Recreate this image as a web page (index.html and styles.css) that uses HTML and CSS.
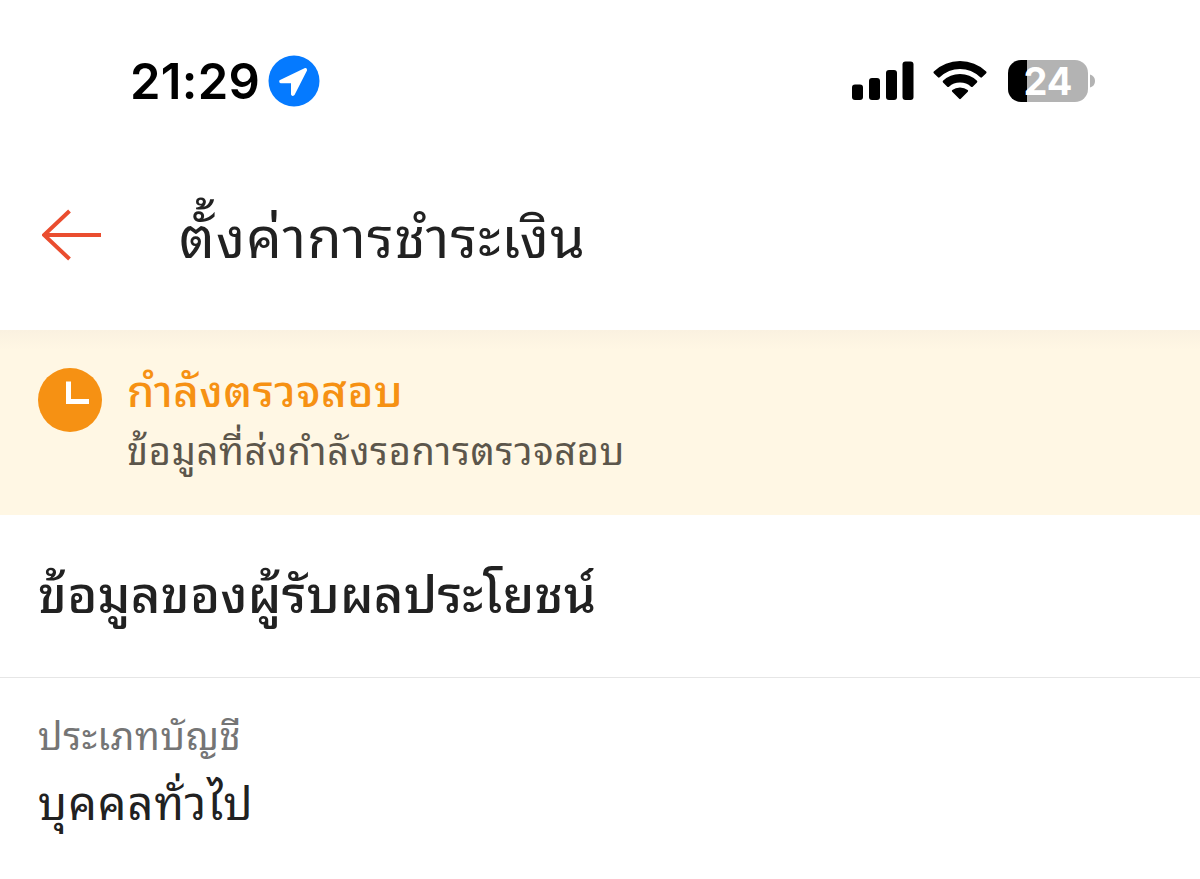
FILE: index.html
```html
<!DOCTYPE html>
<html lang="th">
  <head>
    <meta charset="UTF-8" />
    <title>ตั้งค่าการชำระเงิน</title>
    <link rel="stylesheet" href="styles.css">
  </head>
  <body>
    <!-- status bar -->
    <div class="status-bar">
      <span class="time">21:29</span>
      <svg class="location" viewBox="0 0 52 52">
        <circle cx="26" cy="26" r="25.5" fill="#057aff" />
        <path d="M37 13L11.500 25.300Q10.500 28 13 28.200H23V39.500Q24 42 26.500 40L39 15.500Q39.500 12.500 37 13Z" fill="#fff" />
      </svg>
      <svg class="signal" viewBox="0 0 62 40">
        <rect x="0" y="23.5" width="11" height="15.5" rx="3" />
        <rect x="17" y="17" width="11" height="22" rx="3" />
        <rect x="34" y="9" width="11" height="30" rx="3" />
        <rect x="50.5" y="0.5" width="11" height="38.5" rx="3" />
      </svg>
      <svg class="wifi" viewBox="0 0 54 40">
        <path d="M0.8 12.2Q0 11.4 0.8 10.5Q12 0 27 0T53.2 10.5Q54 11.4 53.2 12.2L49 16.3Q48.200 17 47.300 16.300Q38.500 8 27 8T6.700 16.300Q5.800 17 5 16.300Z" />
        <path d="M10 21.400Q9.300 20.600 10 19.800Q17 13 27 13T44 19.800Q44.700 20.600 44 21.400L39.700 25.700Q38.900 26.400 38 25.700Q33.500 21.500 27 21.500T16 25.700Q15.100 26.400 14.300 25.700Z" />
        <path d="M19.200 30.700Q18.400 29.900 19.300 29.100Q22.500 26.500 27 26.500T34.700 29.100Q35.600 29.900 34.800 30.700L27.800 37.800Q27 38.500 26.200 37.800Z" />
      </svg>
      <div class="battery">
        <div class="battery-body">24</div>
        <svg class="battery-tip" viewBox="0 0 5 14">
          <path d="M0 0.500Q5 2 5 7T0 13.500Z" fill="#b3b3b3" />
        </svg>
      </div>
    </div>

    <header class="header">
      <svg class="back" viewBox="0 0 60 52">
        <path d="M59 26H2M27.500 2L2 26L27.500 50" />
      </svg>
      <h1>ตั้งค่าการชำระเงิน</h1>
    </header>

    <div class="notice">
      <svg class="clock" viewBox="0 0 64 64">
        <circle cx="32" cy="32" r="32" fill="#f69113" />
        <path d="M30.500 13.500V33.500H51" fill="none" stroke="#fff" stroke-width="5" />
      </svg>
      <div class="notice-text">
        <h2>กำลังตรวจสอบ</h2>
        <p>ข้อมูลที่ส่งกำลังรอการตรวจสอบ</p>
      </div>
    </div>

    <h3 class="section-title">ข้อมูลของผู้รับผลประโยชน์</h3>

    <div class="field">
      <p class="label">ประเภทบัญชี</p>
      <p class="value">บุคคลทั่วไป</p>
    </div>
  </body>
</html>
```

FILE: styles.css
```css
* {
  box-sizing: border-box;
}
body {
  margin: 0;
  background: #fff;
  color: #212121;
  font-family: Thonburi, "Noto Sans Thai Looped", Loma, Garuda, Waree, "Noto Serif Thai", sans-serif;
}
h1,
h2,
h3,
p {
  margin: 0;
  white-space: nowrap;
}
.status-bar {
  display: flex;
  align-items: center;
  height: 162px;
  padding-left: 130px;
  font-family: Inter, sans-serif;
}
.time {
  width: 138px;
  font-size: 49px;
  font-weight: 600;
  letter-spacing: 0.3px;
  color: #000;
}
.location {
  width: 52px;
  height: 52px;
}
.signal {
  width: 62px;
  height: 40px;
  margin-left: 532px;
}
.wifi {
  width: 54px;
  height: 40px;
  margin-left: 19px;
}
.battery {
  display: flex;
  align-items: center;
  gap: 2px;
  margin-left: 21px;
}
.battery-body {
  width: 80px;
  height: 42px;
  border-radius: 13px;
  background: linear-gradient(to right, #000 19px, #b3b3b3 19px);
  color: #fff;
  font-size: 38px;
  font-weight: 700;
  line-height: 42px;
  text-align: center;
}
.battery-tip {
  width: 5px;
  height: 14px;
}
.header {
  display: flex;
  align-items: center;
  height: 168px;
  padding: 0 42px 22px;
}
.back {
  width: 60px;
  height: 52px;
  fill: none;
  stroke: #ea4d2f;
  stroke-width: 4;
}
.header h1 {
  margin: -4px 0 0 77px;
  font-size: 56px;
  font-weight: 400;
  letter-spacing: 1.2px;
  line-height: 76px;
}
.notice {
  display: flex;
  height: 185px;
  padding: 30px 38px;
  background: linear-gradient(#faf1e0, #fff7e4 20px);
}
.clock {
  width: 64px;
  height: 64px;
  margin-top: 8px;
}
.notice-text {
  margin: -3px 0 0 25px;
}
.notice h2 {
  color: #f69113;
  font-size: 44px;
  font-weight: 500;
  letter-spacing: 0.6px;
  line-height: 60px;
}
.notice p {
  color: #5c564b;
  font-size: 38px;
  letter-spacing: 0.7px;
  line-height: 62px;
}
.section-title {
  height: 163px;
  padding: 0 38px;
  border-bottom: 1px solid #e6e6e6;
  font-size: 51px;
  font-weight: 500;
  letter-spacing: 0.3px;
  line-height: 150px;
}
.field {
  padding: 25px 38px;
}
.label {
  color: #757575;
  font-size: 38px;
  letter-spacing: 0.6px;
  line-height: 60px;
}
.value {
  font-size: 45px;
  letter-spacing: 1.1px;
  line-height: 74px;
}
```
